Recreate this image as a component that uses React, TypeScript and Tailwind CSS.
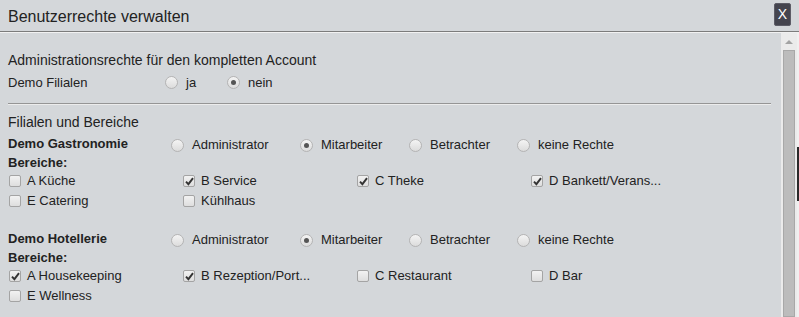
import React from 'react';

type Item = { label: string; checked: boolean };

const roles = ['Administrator', 'Mitarbeiter', 'Betrachter', 'keine Rechte'];
const roleWidths = ['w-[129px]', 'w-[109px]', 'w-[108px]', 'w-[120px]'];

const gastro: Item[] = [
  { label: 'A Küche', checked: false },
  { label: 'B Service', checked: true },
  { label: 'C Theke', checked: true },
  { label: 'D Bankett/Verans...', checked: true },
  { label: 'E Catering', checked: false },
  { label: 'Kühlhaus', checked: false },
];

const hotel: Item[] = [
  { label: 'A Housekeeping', checked: true },
  { label: 'B Rezeption/Port...', checked: true },
  { label: 'C Restaurant', checked: false },
  { label: 'D Bar', checked: false },
  { label: 'E Wellness', checked: false },
];

function Radio({ checked }: { checked: boolean }) {
  return (
    <span className="w-[13px] h-[13px] rounded-full border border-[#b4b4b4] bg-gradient-to-b from-[#f4f4f4] to-[#dcdcdc] flex items-center justify-center shrink-0">
      {checked && <span className="w-[5px] h-[5px] rounded-full bg-[#555]" />}
    </span>
  );
}

function Checkbox({ checked }: { checked: boolean }) {
  return (
    <span className="w-[12px] h-[12px] rounded-[2px] border border-[#a4a4a4] bg-gradient-to-b from-[#f2f2f2] to-[#dedede] flex items-center justify-center shrink-0">
      {checked && (
        <svg width="9" height="9" viewBox="0 0 9 9">
          <path d="M1 4.6 L3.4 7.2 L8 1.2" fill="none" stroke="#333" strokeWidth="1.9" />
        </svg>
      )}
    </span>
  );
}

function Filiale({ name, role, items }: { name: string; role: number; items: Item[] }) {
  return (
    <div>
      <div className="flex h-[21px] items-center">
        <div className="w-[163px] font-bold text-[13px]">{name}</div>
        {roles.map((r, i) => (
          <div key={r} className={`${roleWidths[i]} flex items-center gap-[8px] pt-[3px]`}>
            <Radio checked={i === role} />
            <span className="text-[13px]">{r}</span>
          </div>
        ))}
      </div>
      <div className="h-[17px] flex items-center font-bold text-[13px]">Bereiche:</div>
      <div className="grid grid-cols-[174px_174px_174px_1fr] pl-[1px]">
        {items.map((it) => (
          <div key={it.label} className="h-[20px] flex items-center gap-[6px]">
            <Checkbox checked={it.checked} />
            <span className="text-[13px]">{it.label}</span>
          </div>
        ))}
      </div>
    </div>
  );
}

export default function App() {
  return (
    <div className="w-[799px] h-[317px] overflow-hidden bg-[#d4d7da] text-[#222] font-['Liberation_Sans',Arial,sans-serif] flex flex-col">
      {/* Kopfzeile */}
      <div className="h-[32px] shrink-0 border-b border-[#7c7c7c] flex items-center justify-between pl-2 pr-[8px]">
        <span className="text-[16px] pt-[2px]">Benutzerrechte verwalten</span>
        <button className="w-[17px] h-[23px] mb-[3px] rounded-[2px] bg-[#44444e] border border-[#5c5c66] text-white text-[14px] leading-none flex items-center justify-center">
          X
        </button>
      </div>
      <div className="flex flex-1 min-h-0 border-t border-[#f2f2f2]">
        <div className="flex-1 pl-2 pr-[10px] pt-[16px]">
          <div className="h-[22px] flex items-center text-[14px]">Administrationsrechte für den kompletten Account</div>
          <div className="h-[22px] flex items-center pt-[1px]">
            <div className="w-[157px] text-[13px]">Demo Filialen</div>
            <div className="w-[62px] flex items-center gap-[8px]">
              <Radio checked={false} />
              <span className="text-[13px]">ja</span>
            </div>
            <div className="flex items-center gap-[8px]">
              <Radio checked={true} />
              <span className="text-[13px]">nein</span>
            </div>
          </div>
          <div className="mt-[10px] border-t border-[#959595] border-b border-b-[#ececec]" />
          <div className="mt-[6px] h-[22px] flex items-center text-[14px]">Filialen und Bereiche</div>
          <Filiale name="Demo Gastronomie" role={1} items={gastro} />
          <div className="mt-[17px]">
            <Filiale name="Demo Hotellerie" role={1} items={hotel} />
          </div>
        </div>
        {/* Scrollbar */}
        <div className="w-[16px] shrink-0 bg-[#ebebeb] flex flex-col">
          <div className="h-[17px] flex items-center justify-center">
            <span className="w-0 h-0 border-l-[4px] border-r-[4px] border-b-[4px] border-l-transparent border-r-transparent border-b-[#a3a3a3]" />
          </div>
          <div className="flex-1 mx-[2px] bg-[#bcbcbc] border border-[#a8a8a8]" />
        </div>
        <div className="w-[2px] shrink-0 bg-[#f0f0f0] flex flex-col">
          <div className="h-[114px]" />
          <div className="h-[54px] bg-[#2a2a2a]" />
        </div>
      </div>
    </div>
  );
}
